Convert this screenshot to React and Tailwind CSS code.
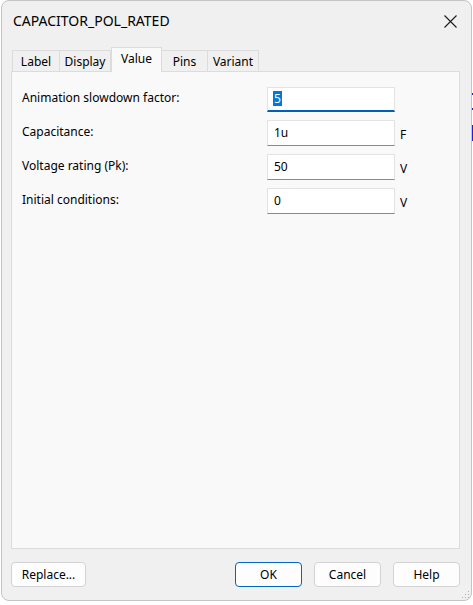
import React from "react";

const font = { fontFamily: '"Noto Sans", "Open Sans", sans-serif' };

function Tab({ label, selected, w }) {
  if (selected) {
    return (
      <div
        className={`relative z-10 flex h-[25px] items-start justify-center border border-b-0 border-[#dcdcdc] bg-[#f9f9f9] pt-[2px] text-[12px] text-black ${w}`}
      >
        {label}
      </div>
    );
  }
  return (
    <div
      className={`flex h-[22px] items-center justify-center border border-b-0 border-l-0 border-[#dcdcdc] pt-[1px] text-[12px] text-black ${w}`}
    >
      {label}
    </div>
  );
}

function Row({ label, value, unit, focused }) {
  return (
    <div className="flex h-[26px] items-center">
      <div className="w-[245px] pb-[3px] text-[12px] text-black">{label}</div>
      {focused ? (
        <div className="flex h-[25px] w-[128px] items-center border border-b-2 border-[#e3e3e3] border-b-[#005fb8] bg-white pl-[5px] text-[12px]">
          <span className="bg-[#0078d7] px-[1px] leading-[15px] text-white">{value}</span>
        </div>
      ) : (
        <div className="flex h-[26px] w-[128px] items-center border border-[#e3e3e3] border-b-[#8a8a8a] bg-white pl-[6px] pb-[1px] text-[12px] text-black">
          {value}
        </div>
      )}
      <div className="ml-[5px] pt-[4px] text-[12px] text-black">{unit}</div>
    </div>
  );
}

function Btn({ children, w, primary }) {
  return (
    <div
      className={`flex h-[25px] items-center justify-center rounded-[4px] border bg-[#fdfdfd] text-[12px] text-black ${
        primary ? "border-[#0067c0]" : "border-[#d3d3d3]"
      } ${w}`}
    >
      {children}
    </div>
  );
}

export default function App() {
  return (
    <div className="relative h-[605px] w-[473px] overflow-hidden bg-white" style={font}>
      <div className="absolute left-[472px] top-[93px] h-[2px] w-[1px] bg-[#1f1fe0]" />
      <div className="absolute left-[472px] top-[108px] h-[2px] w-[1px] bg-[#1f1fe0]" />
      <div className="absolute left-[472px] top-[125px] h-[16px] w-[1px] bg-[#1f1fe0]" />
      <div className="ml-[1px] flex h-[601px] w-[471px] flex-col rounded-[8px] border border-[#c4c4c4] bg-[#f0f0f0]">
        <div className="flex h-[38px] items-center justify-between pl-[11px] pr-[14px]">
          <div className="text-[14px] text-black">CAPACITOR_POL_RATED</div>
          <svg width="13" height="13" viewBox="0 0 13 13" className="mt-[2px]">
            <path d="M0.5 0.5 L12.5 12.5 M12.5 0.5 L0.5 12.5" stroke="#1a1a1a" strokeWidth="1.1" />
          </svg>
        </div>
        <div className="mt-[8px] flex h-[25px] items-end pl-[10px]">
          <div className="flex h-[22px] w-[48px] items-center justify-center border border-b-0 border-[#dcdcdc] pt-[1px] text-[12px] text-black">
            Label
          </div>
          <Tab label="Display" w="w-[51px]" />
          <Tab label="Value" w="w-[51px]" selected />
          <Tab label="Pins" w="w-[46px]" />
          <Tab label="Variant" w="w-[51px]" />
        </div>
        <div className="-mt-px ml-[9px] flex h-[478px] w-[449px] flex-col gap-[8px] border border-[#dcdcdc] bg-[#f9f9f9] pl-[10px] pt-[14px]">
          <Row label="Animation slowdown factor:" value="5" focused />
          <Row label="Capacitance:" value="1u" unit="F" />
          <Row label="Voltage rating (Pk):" value="50" unit="V" />
          <Row label="Initial conditions:" value="0" unit="V" />
        </div>
        <div className="mt-[13px] flex items-center pl-[9px]">
          <Btn w="w-[75px]">Replace...</Btn>
          <div className="ml-[149px] flex gap-[12px]">
            <Btn w="w-[67px]" primary>
              OK
            </Btn>
            <Btn w="w-[67px]">Cancel</Btn>
            <Btn w="w-[67px]">Help</Btn>
          </div>
        </div>
        <div className="relative flex-1">
          <svg width="8" height="8" viewBox="0 0 8 8" className="absolute bottom-[1px] right-[1px]">
            <rect x="6" y="0" width="1" height="1" fill="#b0b0b0" />
            <rect x="3" y="3" width="1" height="1" fill="#b0b0b0" />
            <rect x="6" y="3" width="1" height="1" fill="#b0b0b0" />
            <rect x="0" y="6" width="1" height="1" fill="#b0b0b0" />
            <rect x="3" y="6" width="1" height="1" fill="#b0b0b0" />
            <rect x="6" y="6" width="1" height="1" fill="#b0b0b0" />
          </svg>
        </div>
      </div>
    </div>
  );
}
